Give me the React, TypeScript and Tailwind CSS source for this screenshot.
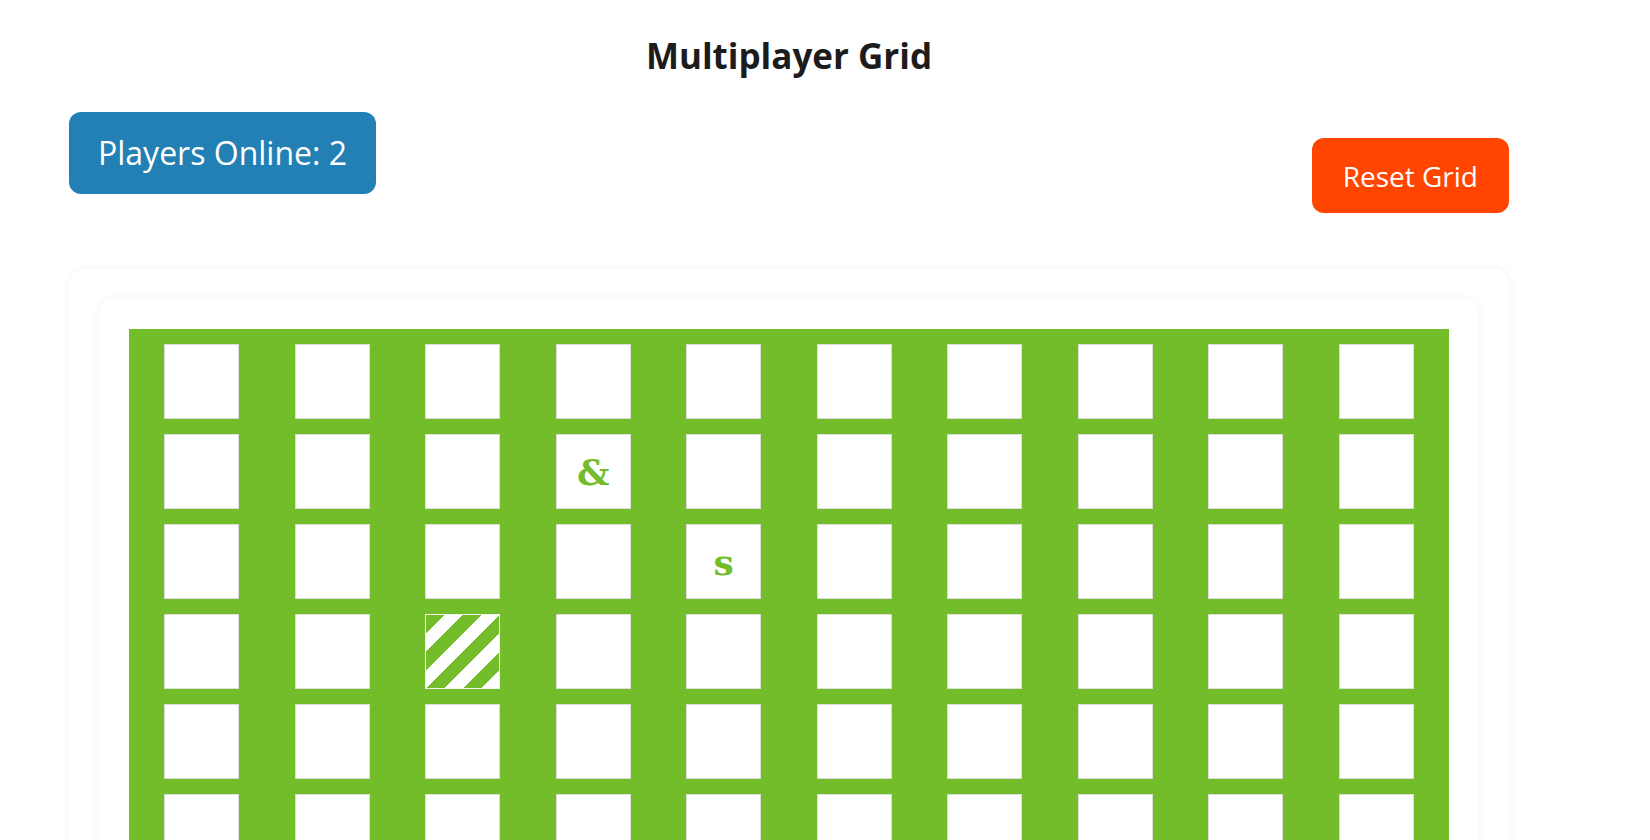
const ROWS = 10;
const COLS = 10;

// cells that carry something: a letter or the striped "claimed" pattern
const marks: Record<string, string> = {
  '1-3': '&',
  '2-4': 's',
  '3-2': 'hatch',
};

function Cell({ mark }: { mark?: string }) {
  if (mark === 'hatch') {
    return (
      <div className="w-[75px] h-[75px] border border-[#f0f0f0] bg-[repeating-linear-gradient(135deg,#73bd2b_0px,#73bd2b_13px,#ffffff_13px,#ffffff_26px)]" />
    );
  }
  return (
    <div className="w-[75px] h-[75px] border border-[#dddddd] bg-white flex items-center justify-center">
      {mark && (
        <span className="font-['DejaVu_Serif',serif] font-bold text-[36px] leading-none text-[#73bd2b]">
          {mark}
        </span>
      )}
    </div>
  );
}

export default function App() {
  return (
    <div className="min-h-screen bg-white font-['Open_Sans',sans-serif]">
      <div className="ml-[69px] w-[1440px] pb-10">
        {/* Title */}
        <h1 className="pt-[32px] text-center text-[35px] leading-[48px] font-bold text-[#1c1c1c]">
          Multiplayer Grid
        </h1>

        {/* Controls */}
        <div className="mt-[32px] flex items-start justify-between">
          <div className="h-[82px] px-[29px] flex items-center rounded-[12px] bg-[#2280b4] text-white text-[32px]">
            Players Online: 2
          </div>
          <button className="mt-[26px] h-[75px] px-[31px] flex items-center rounded-[12px] bg-[#ff4500] text-white text-[28px]">
            Reset Grid
          </button>
        </div>

        {/* Board */}
        <div className="mt-[56px] p-[30px] rounded-[15px] bg-white shadow-[0_0_10px_rgba(0,0,0,0.06)]">
          <div className="p-[30px] rounded-[15px] bg-white shadow-[0_0_10px_rgba(0,0,0,0.06)]">
            <div className="grid grid-cols-10 gap-[15px] p-[15px] bg-[#73bd2b]">
              {Array.from({ length: ROWS * COLS }).map((_, i) => {
                const r = Math.floor(i / COLS);
                const c = i % COLS;
                return (
                  <div key={i} className="flex justify-center">
                    <Cell mark={marks[`${r}-${c}`]} />
                  </div>
                );
              })}
            </div>
          </div>
        </div>
      </div>
    </div>
  );
}
